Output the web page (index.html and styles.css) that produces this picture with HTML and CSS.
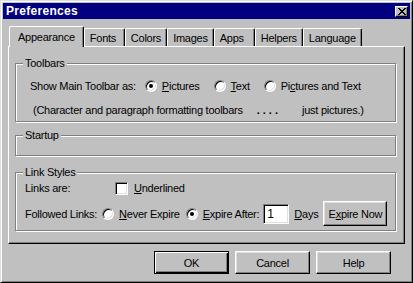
FILE: index.html
```html
<!DOCTYPE html>
<html lang="en">
<head>
    <meta charset="UTF-8">
    <title>Preferences</title>
    <link rel="stylesheet" href="styles.css">
</head>
<body>
    <div class="window">
        <div class="titlebar">
            <span class="title">Preferences</span>
            <span class="close">
                <svg width="8" height="7" viewBox="0 0 8 7" shape-rendering="crispEdges"><path d="M0 0h2v1H0zM6 0h2v1H6zM1 1h2v1H1zM5 1h2v1H5zM2 2h4v1H2zM3 3h2v1H3zM2 4h4v1H2zM1 5h2v1H1zM5 5h2v1H5zM0 6h2v1H0zM6 6h2v1H6z" fill="#000"/></svg>
            </span>
        </div>

        <div class="tabs">
            <div class="tab active">Appearance</div>
            <div class="tab">Fonts</div>
            <div class="tab">Colors</div>
            <div class="tab">Images</div>
            <div class="tab">Apps</div>
            <div class="tab">Helpers</div>
            <div class="tab">Language</div>
        </div>

        <div class="panel">
            <fieldset class="group">
                <legend>Toolbars</legend>
                <div class="row row-toolbar">
                    <span class="label">Show Main Toolbar as:</span>
                    <span class="opt"><span class="radio on"></span><span><u>P</u>ictures</span></span>
                    <span class="opt"><span class="radio"></span><span><u>T</u>ext</span></span>
                    <span class="opt"><span class="radio"></span><span>Pi<u>c</u>tures and Text</span></span>
                </div>
                <div class="row row-note">
                    <span>(Character and paragraph formatting toolbars</span>
                    <b class="dots">....</b>
                    <span class="note-end">just pictures.)</span>
                </div>
            </fieldset>

            <fieldset class="group group-startup">
                <legend>Startup</legend>
                <div class="empty"></div>
            </fieldset>

            <fieldset class="group group-links">
                <legend>Link Styles</legend>
                <div class="row row-links">
                    <span class="label-links">Links are:</span>
                    <span class="opt"><span class="check"></span><span><u>U</u>nderlined</span></span>
                </div>
                <div class="row row-followed">
                    <span class="label-followed">Followed Links:</span>
                    <span class="opt"><span class="radio"></span><span><u>N</u>ever Expire</span></span>
                    <span class="opt"><span class="radio on"></span><span><u>E</u>xpire After:</span></span>
                    <span class="field">1</span>
                    <span class="days"><u>D</u>ays</span>
                    <button class="btn btn-small">E<u>x</u>pire Now</button>
                </div>
            </fieldset>
        </div>

        <div class="actions">
            <button class="btn btn-default">OK</button>
            <button class="btn">Cancel</button>
            <button class="btn">Help</button>
        </div>
    </div>
</body>
</html>
```

FILE: styles.css
```css
body {
    margin: 0;
    background-color: #c0c0c0;
    font-family: "Liberation Sans", Arial, sans-serif;
    font-size: 11px;
    letter-spacing: -0.25px;
    color: #000;
}

.window {
    width: 413px;
    height: 283px;
    box-sizing: border-box;
    padding: 2px;
    background-color: #c0c0c0;
    border: 1px solid;
    border-color: #dfdfdf #000 #000 #dfdfdf;
    box-shadow: inset 1px 1px 0 #fff, inset -1px -1px 0 #808080;
}

.titlebar {
    height: 16px;
    display: flex;
    align-items: center;
    justify-content: space-between;
    padding: 0 2px 0 3px;
    background-color: #000080;
}

.title {
    color: #fff;
    font-weight: bold;
    font-size: 12px;
    letter-spacing: 0.3px;
}

.close {
    width: 13px;
    height: 11px;
    box-sizing: border-box;
    display: flex;
    align-items: center;
    justify-content: center;
    background-color: #c0c0c0;
    border: 1px solid;
    border-color: #fff #000 #000 #fff;
    box-shadow: inset -1px -1px 0 #808080;
}

/* tabs */
.tabs {
    display: flex;
    align-items: flex-end;
    height: 20px;
    margin: 7px 0 0 6px;
}

.tab {
    height: 18px;
    min-width: 41px;
    box-sizing: border-box;
    padding: 0 5px;
    display: flex;
    align-items: center;
    background-color: #c0c0c0;
    border-top: 1px solid #fff;
    border-left: 1px solid #fff;
    border-right: 1px solid #000;
    border-radius: 2px 2px 0 0;
    box-shadow: inset -1px 0 0 #808080;
}

.tab.active {
    height: 21px;
    padding: 0 8px;
    margin-bottom: -1px;
    position: relative;
}

.panel {
    height: 198px;
    box-sizing: border-box;
    margin: 0 5px;
    padding: 10px 8px 0 6px;
    border: 1px solid;
    border-color: #fff #000 #000 #fff;
    box-shadow: inset -1px -1px 0 #808080;
}

/* group boxes */
.group {
    margin: 0;
    padding: 0;
    min-width: 0;
    border: 1px solid #808080;
    box-shadow: 1px 1px 0 #fff, inset 1px 1px 0 #fff;
}

.group legend {
    margin-left: 7px;
    padding: 0 2px;
    line-height: 13px;
    background-color: #c0c0c0;
}

.group-startup {
    margin-top: 7px;
}

.group-links {
    margin-top: 10px;
}

.empty {
    height: 13px;
}

.row {
    display: flex;
    align-items: center;
    white-space: nowrap;
}

.row-toolbar {
    height: 24px;
    margin-top: 4px;
    padding-left: 14px;
}

.row-note {
    height: 23px;
    padding-left: 17px;
}

.row-links {
    height: 18px;
    padding-left: 9px;
}

.row-followed {
    height: 33px;
    padding-left: 9px;
}

.label {
    margin-right: 9px;
}

.label-links {
    width: 90px;
}

.label-followed {
    margin-right: 5px;
}

.opt {
    display: flex;
    align-items: center;
    gap: 5px;
    margin-right: 14px;
}

.row-links .opt {
    gap: 6px;
}

.row-followed .opt {
    margin-right: 6px;
}

.row-followed .opt + .opt {
    margin-right: 4px;
}

.dots {
    margin-left: 14px;
    letter-spacing: 3px;
}

.note-end {
    margin-left: 21px;
}

/* controls */
.radio {
    width: 12px;
    height: 12px;
    box-sizing: border-box;
    position: relative;
    border-radius: 50%;
    background-color: #fff;
    border: 1px solid;
    border-color: #808080 #fff #fff #808080;
    box-shadow: inset 1px 1px 0 #000, inset -1px -1px 0 #dfdfdf;
}

.radio.on::after {
    content: "";
    position: absolute;
    top: 3px;
    left: 3px;
    width: 4px;
    height: 4px;
    border-radius: 50%;
    background-color: #000;
}

.check {
    width: 13px;
    height: 13px;
    box-sizing: border-box;
    background-color: #fff;
    border: 1px solid;
    border-color: #808080 #fff #fff #808080;
    box-shadow: inset 1px 1px 0 #000, inset -1px -1px 0 #dfdfdf;
}

.field {
    width: 26px;
    height: 20px;
    box-sizing: border-box;
    padding: 1px 0 0 3px;
    background-color: #fff;
    border: 1px solid;
    border-color: #808080 #fff #fff #808080;
    box-shadow: inset 1px 1px 0 #000, inset -1px -1px 0 #dfdfdf;
    font-size: 12px;
    line-height: 16px;
}

.days {
    margin-left: 5px;
}

.btn {
    width: 75px;
    height: 23px;
    padding: 0;
    font-family: inherit;
    font-size: 11px;
    letter-spacing: inherit;
    color: #000;
    background-color: #c0c0c0;
    border: 1px solid;
    border-color: #fff #000 #000 #fff;
    box-shadow: inset -1px -1px 0 #808080, inset 1px 1px 0 #dfdfdf;
}

.btn-small {
    width: 64px;
    height: 25px;
    margin-left: 5px;
}

.btn-default {
    border-color: #000;
    box-shadow: inset 1px 1px 0 #fff, inset -1px -1px 0 #000, inset -2px -2px 0 #808080;
}

.actions {
    display: flex;
    justify-content: flex-end;
    gap: 6px;
    margin: 7px 19px 0 0;
}
```
